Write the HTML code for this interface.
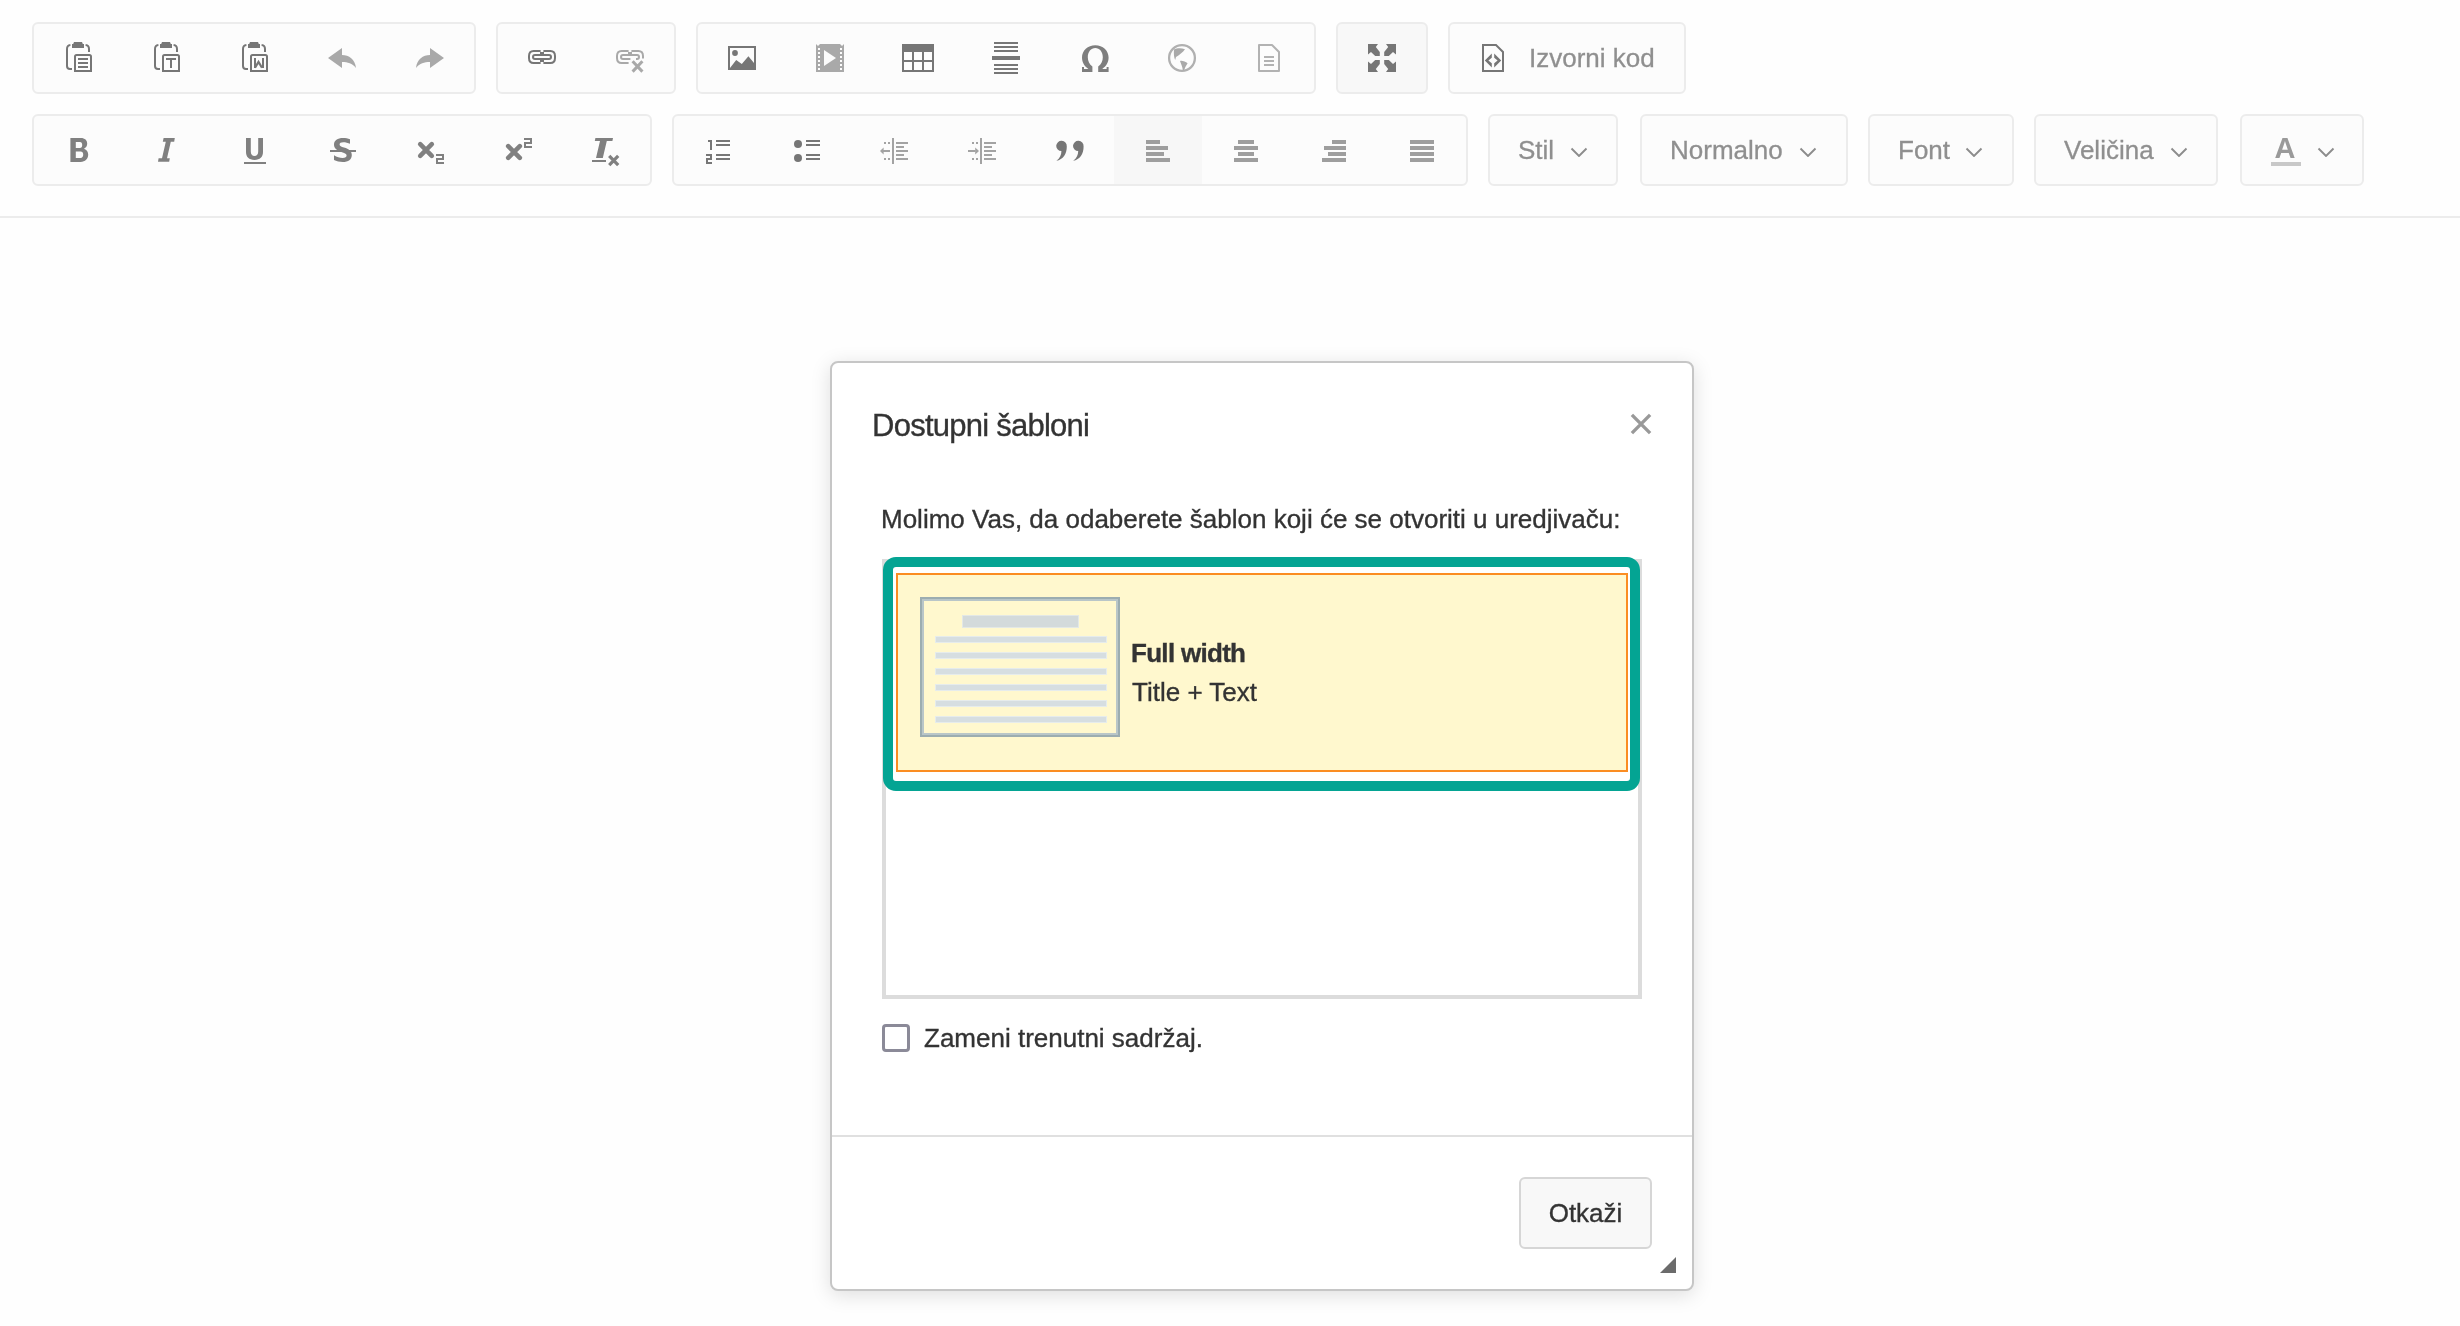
<!DOCTYPE html>
<html><head><meta charset="utf-8"><title>Templates</title>
<style>
html,body{margin:0;padding:0;width:2460px;height:1326px;overflow:hidden;background:#fefefe;font-family:"Liberation Sans",sans-serif;}
.a{position:absolute;}
.g{position:absolute;box-sizing:border-box;border:2px solid #ececec;border-radius:6px;background:#fcfcfc;}
.ic{position:absolute;width:32px;height:32px;overflow:visible;filter:blur(0.45px);}
.cb{position:absolute;box-sizing:border-box;border:2px solid #ececec;border-radius:6px;background:#fcfcfc;height:72px;top:114px;}
.ct{position:absolute;top:135px;font-size:26px;line-height:30px;color:#8f8f8f;white-space:nowrap;-webkit-text-stroke:0.3px #8f8f8f;will-change:transform;}
.chev{position:absolute;width:18px;height:10px;top:147px;}
.txt{position:absolute;white-space:nowrap;color:#333;-webkit-text-stroke:0.35px #333;will-change:transform;}
</style></head><body>
<!-- toolbar row 1 -->
<div class="g" style="left:32px;top:22px;width:444px;height:72px"></div>
<div class="g" style="left:496px;top:22px;width:180px;height:72px"></div>
<div class="g" style="left:696px;top:22px;width:620px;height:72px"></div>
<div class="g" style="left:1336px;top:22px;width:92px;height:72px;background:#f8f8f8"></div>
<div class="g" style="left:1448px;top:22px;width:238px;height:72px"></div>
<!-- toolbar row 2 -->
<div class="g" style="left:32px;top:114px;width:620px;height:72px"></div>
<div class="g" style="left:672px;top:114px;width:796px;height:72px"><div class="a" style="left:440px;top:0;width:88px;height:68px;background:#f7f7f7"></div></div>
<div class="cb" style="left:1488px;width:130px"></div>
<div class="cb" style="left:1640px;width:208px"></div>
<div class="cb" style="left:1868px;width:146px"></div>
<div class="cb" style="left:2034px;width:184px"></div>
<div class="cb" style="left:2240px;width:124px"></div>
<div class="ct" style="left:1518px">Stil</div>
<div class="ct" style="left:1670px">Normalno</div>
<div class="ct" style="left:1898px">Font</div>
<div class="ct" style="left:2064px">Veličina</div>
<svg class="chev" style="left:1570px" viewBox="0 0 18 10"><path d="M1.5,1.5 L9,9 L16.5,1.5" fill="none" stroke="#8c8c8c" stroke-width="1.9"/></svg>
<svg class="chev" style="left:1799px" viewBox="0 0 18 10"><path d="M1.5,1.5 L9,9 L16.5,1.5" fill="none" stroke="#8c8c8c" stroke-width="1.9"/></svg>
<svg class="chev" style="left:1965px" viewBox="0 0 18 10"><path d="M1.5,1.5 L9,9 L16.5,1.5" fill="none" stroke="#8c8c8c" stroke-width="1.9"/></svg>
<svg class="chev" style="left:2170px" viewBox="0 0 18 10"><path d="M1.5,1.5 L9,9 L16.5,1.5" fill="none" stroke="#8c8c8c" stroke-width="1.9"/></svg>
<svg class="chev" style="left:2317px" viewBox="0 0 18 10"><path d="M1.5,1.5 L9,9 L16.5,1.5" fill="none" stroke="#8c8c8c" stroke-width="1.9"/></svg>
<!-- separator -->
<div class="a" style="left:0;top:216px;width:2460px;height:2px;background:#ececec"></div>

<!-- ICONS -->
<svg class="ic" style="left:62px;top:40px" viewBox="0 0 16 16" fill="#767676" ><path d="M6,1 H10 L10.4,2 H11 V4 H5 V2 H5.6 Z"/><path d="M4.2,2.5 C3.1,2.6 2.5,3.3 2.5,4.5 V13 C2.5,14 3,14.5 4,14.5 H5" fill="none" stroke="#767676" stroke-width="1"/><path d="M11.8,2.5 C12.9,2.6 13.5,3.3 13.5,4.5 V6" fill="none" stroke="#767676" stroke-width="1"/><path d="M6.5,15.5 V8.3 Q6.5,7.5 7.3,7.5 H13.7 Q14.5,7.5 14.5,8.3 V15.5 Z" fill="none" stroke="#767676" stroke-width="1"/><rect x="8" y="9" width="5" height="1"/><rect x="8" y="11" width="5" height="1"/><rect x="8" y="13" width="5" height="1"/></svg>
<svg class="ic" style="left:150px;top:40px" viewBox="0 0 16 16" fill="#767676" ><path d="M6,1 H10 L10.4,2 H11 V4 H5 V2 H5.6 Z"/><path d="M4.2,2.5 C3.1,2.6 2.5,3.3 2.5,4.5 V13 C2.5,14 3,14.5 4,14.5 H5" fill="none" stroke="#767676" stroke-width="1"/><path d="M11.8,2.5 C12.9,2.6 13.5,3.3 13.5,4.5 V6" fill="none" stroke="#767676" stroke-width="1"/><path d="M6.5,15.5 V8.3 Q6.5,7.5 7.3,7.5 H13.7 Q14.5,7.5 14.5,8.3 V15.5 Z" fill="none" stroke="#767676" stroke-width="1"/><rect x="8" y="9" width="5" height="1"/><rect x="10" y="10" width="1" height="4"/></svg>
<svg class="ic" style="left:238px;top:40px" viewBox="0 0 16 16" fill="#767676" ><path d="M6,1 H10 L10.4,2 H11 V4 H5 V2 H5.6 Z"/><path d="M4.2,2.5 C3.1,2.6 2.5,3.3 2.5,4.5 V13 C2.5,14 3,14.5 4,14.5 H5" fill="none" stroke="#767676" stroke-width="1"/><path d="M11.8,2.5 C12.9,2.6 13.5,3.3 13.5,4.5 V6" fill="none" stroke="#767676" stroke-width="1"/><path d="M6.5,15.5 V8.3 Q6.5,7.5 7.3,7.5 H13.7 Q14.5,7.5 14.5,8.3 V15.5 Z" fill="none" stroke="#767676" stroke-width="1"/><rect x="8" y="9" width="1" height="5"/><rect x="12" y="9" width="1" height="5"/><path d="M8.5,13.9 L10.25,11 L12,13.9" fill="none" stroke="#767676" stroke-width="1.1"/></svg>
<svg class="ic" style="left:326px;top:40px" viewBox="0 0 16 16" fill="#a9a9a9" ><path d="M1,9 L8,4 L8,7.5 C11.5,7.5 14.5,9.5 15,14 C13,11.6 11,11 8,11 L8,14 Z"/></svg>
<svg class="ic" style="left:414px;top:40px" viewBox="0 0 16 16" fill="#a9a9a9" ><path d="M15,9 L8,4 L8,7.5 C4.5,7.5 1.5,9.5 1,14 C3,11.6 5,11 8,11 L8,14 Z"/></svg>
<svg class="ic" style="left:526px;top:40px" viewBox="0 0 16 16" fill="#767676" ><path d="M7.3,5.5 H3.8 Q1.5,5.5 1.5,8 V9 Q1.5,11.5 3.8,11.5 H7.3" fill="none" stroke="#767676" stroke-width="1"/><path d="M8.7,5.5 H12.2 Q14.5,5.5 14.5,8 V9 Q14.5,11.5 12.2,11.5 H8.7" fill="none" stroke="#767676" stroke-width="1"/><rect x="3.5" y="7.5" width="9" height="2" rx="1" fill="none" stroke="#767676" stroke-width="1"/><rect x="7" y="6" width="2" height="1"/><rect x="7" y="10" width="2" height="1"/></svg>
<svg class="ic" style="left:614px;top:40px" viewBox="0 0 16 16" fill="#a9a9a9" ><path d="M7.3,5.5 H3.8 Q1.5,5.5 1.5,8 V9 Q1.5,11.5 3.8,11.5 H7.3" fill="none" stroke="#a9a9a9" stroke-width="1"/><path d="M8.7,5.5 H12.2 Q14.5,5.5 14.5,8 V9.2" fill="none" stroke="#a9a9a9" stroke-width="1"/><path d="M8.2,9.5 H4.5 Q3.5,9.5 3.5,8.5 Q3.5,7.5 4.5,7.5 H11.5 Q12.5,7.5 12.5,8.5 Q12.5,9.5 11.5,9.5 H11" fill="none" stroke="#a9a9a9" stroke-width="1"/><path d="M9.3,10.6 L14.2,15.8 M14.2,10.6 L9.3,15.8" stroke="#a9a9a9" stroke-width="1.5" fill="none"/><rect x="7" y="6" width="2" height="1"/></svg>
<svg class="ic" style="left:726px;top:40px" viewBox="0 0 16 16" fill="#767676" ><rect x="1.5" y="3.5" width="13" height="11" fill="none" stroke="#767676" stroke-width="1"/><circle cx="4.5" cy="6.5" r="1.45"/><path d="M2,14 L5.1,10 L7.9,12 L11.2,8.1 L14,11.5 L14,14 Z"/></svg>
<svg class="ic" style="left:814px;top:40px" viewBox="0 0 16 16" fill="#a9a9a9" ><path fill-rule="evenodd" d="M1,2 L2,3 L3,2 L13,2 L14,3 L15,2 L15,16 L1,16 Z M2,4 h1 v1 h-1 Z M2,6 h1 v1 h-1 Z M2,8 h1 v1 h-1 Z M2,10 h1 v1 h-1 Z M2,12 h1 v1 h-1 Z M2,14 h1 v1 h-1 Z M13,4 h1 v1 h-1 Z M13,6 h1 v1 h-1 Z M13,8 h1 v1 h-1 Z M13,10 h1 v1 h-1 Z M13,12 h1 v1 h-1 Z M13,14 h1 v1 h-1 Z M5,5 L11,9 L5,13 Z"/></svg>
<svg class="ic" style="left:902px;top:40px" viewBox="0 0 16 16" fill="#767676" ><path fill-rule="evenodd" d="M0,2 H16 V16 H0 Z M1,6 h4 v4 h-4 Z M6,6 h4 v4 h-4 Z M11,6 h4 v4 h-4 Z M1,11 h4 v4 h-4 Z M6,11 h4 v4 h-4 Z M11,11 h4 v4 h-4 Z"/></svg>
<svg class="ic" style="left:990px;top:40px" viewBox="0 0 16 16" fill="#767676" ><rect x="2" y="1" width="12" height="1"/><rect x="2" y="3" width="12" height="1"/><rect x="2" y="5" width="12" height="1"/><rect x="1" y="8" width="14" height="2"/><rect x="2" y="12" width="12" height="1"/><rect x="2" y="14" width="12" height="1"/><rect x="2" y="16" width="12" height="1"/></svg>
<svg class="ic" style="left:1078px;top:40px" viewBox="0 0 16 16" fill="#767676" ><path fill="#7e7e7e" d="M2,16 V13.5 H3 V14.5 H5.2 C3.2,13.2 2,11.2 2,8.8 C2,5.2 4.9,2.6 8.65,2.6 C12.4,2.6 15.3,5.2 15.3,8.8 C15.3,11.2 14.1,13.2 12.1,14.5 H14.3 V13.5 H15.3 V16 H10.1 V13.2 C11.6,12.2 12.4,10.6 12.4,8.6 C12.4,5.9 10.8,4 8.65,4 C6.5,4 4.9,5.9 4.9,8.6 C4.9,10.6 5.7,12.2 7.2,13.2 V16 Z"/></svg>
<svg class="ic" style="left:1166px;top:40px" viewBox="0 0 16 16" fill="#a9a9a9" ><circle cx="8" cy="9" r="6.45" fill="none" stroke="#b0b0b0" stroke-width="1.15"/><path d="M4,4.8 C5.5,4 7.5,4 9.5,4.6 C8.5,6.2 6.5,7.5 5,8.5 L4.6,10 C4,9 3.8,7 4,4.8 Z"/><path d="M7,10.5 C8,10.2 9.8,10.8 10.8,11.6 C10,12.8 9.4,14 9,15.2 L8.4,15 C8.3,13.5 7.5,12 7,10.5 Z"/></svg>
<svg class="ic" style="left:1254px;top:40px" viewBox="0 0 16 16" fill="#b2b2b2" ><path d="M2.5,2.5 H9 L12.5,6 V15.5 H2.5 Z" fill="none" stroke="#b2b2b2" stroke-width="1" stroke-linejoin="round"/><rect x="5" y="8" width="5" height="1"/><rect x="5" y="10" width="5" height="1"/><rect x="5" y="12" width="5" height="1"/></svg>
<svg class="ic" style="left:1366px;top:40px" viewBox="0 0 16 16" fill="#767676" ><path d="M1,2 L6,2 L4.9,3.5 L6.9,6 L6.9,8 L4.6,8 L2.5,6 L1,7.2 Z M15,2 L10,2 L11.1,3.5 L9.1,6 L9.1,8 L11.4,8 L13.5,6 L15,7.2 Z M1,16 L6,16 L4.9,14.5 L6.9,12 L6.9,10 L4.6,10 L2.5,12 L1,10.8 Z M15,16 L10,16 L11.1,14.5 L9.1,12 L9.1,10 L11.4,10 L13.5,12 L15,10.8 Z"/></svg>
<svg class="ic" style="left:1476px;top:40px" viewBox="0 0 16 16" fill="#767676" ><path d="M3.5,2.5 H10 L13.5,6 V15.5 H3.5 Z" fill="none" stroke="#767676" stroke-width="1"/><path d="M7.9,6.8 L7.9,8.9 L6.2,10.25 L7.9,11.6 L7.9,13.7 L4.4,10.25 Z M9.1,6.8 L9.1,8.9 L10.8,10.25 L9.1,11.6 L9.1,13.7 L12.6,10.25 Z"/></svg>
<svg class="ic" style="left:62px;top:134px" viewBox="0 0 16 16" fill="#808080" ><path fill-rule="evenodd" d="M4.2,2 H9.4 C11.5,2 12.6,3.2 12.6,4.8 C12.6,6 12,6.9 11,7.4 C12.4,7.8 13.1,9 13.1,10.3 C13.1,12.5 11.6,14 9.3,14 H4.2 Z M6.9,4 V7 H9 C9.7,7 10.1,6.4 10.1,5.5 C10.1,4.6 9.7,4 9,4 Z M6.9,8.8 V12 H9.3 C10.1,12 10.6,11.4 10.6,10.4 C10.6,9.4 10.1,8.8 9.3,8.8 Z"/></svg>
<svg class="ic" style="left:150px;top:134px" viewBox="0 0 16 16" fill="#808080" ><path d="M6.8,2 H12.4 L12.1,3.9 H10.4 L8.5,12.1 H9.9 L9.6,13.9 H4 L4.3,12.1 H6 L7.9,3.9 H6.4 Z"/></svg>
<svg class="ic" style="left:238px;top:134px" viewBox="0 0 16 16" fill="#808080" ><path d="M4,2 H6.4 V8.8 C6.4,10.3 7.1,11 8.25,11 C9.4,11 10.1,10.3 10.1,8.8 V2 H12.5 V9 C12.5,11.5 11,12.95 8.25,12.95 C5.5,12.95 4,11.5 4,9 Z"/><rect x="3" y="14" width="11" height="1"/></svg>
<svg class="ic" style="left:326px;top:134px" viewBox="0 0 16 16" fill="#808080" ><path d="M12,2.6 V4.9 C11,4.4 9.8,4.1 8.6,4.1 C7.4,4.1 6.8,4.5 6.8,5.2 C6.8,6 7.6,6.3 9,6.8 C11.5,7.6 12.9,8.6 12.9,10.5 C12.9,12.7 11.2,14 8.4,14 C6.8,14 5.2,13.6 4,13 V10.6 C5.4,11.5 6.9,12 8.3,12 C9.6,12 10.3,11.6 10.3,10.8 C10.3,10 9.6,9.6 8,9.1 C5.5,8.3 4,7.3 4,5.3 C4,3.2 5.8,2 8.5,2 C9.8,2 11,2.2 12,2.6 Z"/><rect x="2" y="8" width="13" height="1"/></svg>
<svg class="ic" style="left:414px;top:134px" viewBox="0 0 16 16" fill="#808080" ><path d="M3.1,5.1 L8.9,10.9 M8.9,5.1 L3.1,10.9" stroke="#808080" stroke-width="2.3" stroke-linecap="round" fill="none"/><rect x="11" y="10" width="4" height="1"/><rect x="14" y="10" width="1" height="3"/><rect x="11" y="12" width="4" height="1"/><rect x="11" y="12" width="1" height="3"/><rect x="11" y="14" width="4" height="1"/></svg>
<svg class="ic" style="left:502px;top:134px" viewBox="0 0 16 16" fill="#808080" ><path d="M3.1,6.1 L8.9,11.9 M8.9,6.1 L3.1,11.9" stroke="#808080" stroke-width="2.3" stroke-linecap="round" fill="none"/><rect x="11" y="2" width="4" height="1"/><rect x="14" y="2" width="1" height="3"/><rect x="11" y="4" width="4" height="1"/><rect x="11" y="4" width="1" height="3"/><rect x="11" y="6" width="4" height="1"/></svg>
<svg class="ic" style="left:590px;top:134px" viewBox="0 0 16 16" fill="#808080" ><path d="M2.7,2 H11.5 L11.2,3.5 H8.4 L6.4,12 H3 L5,3.5 H2.4 Z"/><rect x="1" y="13" width="7" height="1"/><path d="M9.6,10.9 L14.1,15.6 M14.1,10.9 L9.6,15.6" stroke="#808080" stroke-width="1.6" fill="none"/></svg>
<svg class="ic" style="left:702px;top:134px" viewBox="0 0 16 16" fill="#767676" ><rect x="3" y="3" width="2" height="1"/><rect x="4" y="3" width="1" height="5"/><rect x="2" y="10" width="3" height="1"/><rect x="4" y="10" width="1" height="3"/><rect x="2" y="12" width="3" height="1"/><rect x="2" y="12" width="1" height="3"/><rect x="2" y="14" width="3" height="1"/><rect x="7" y="3" width="7" height="1"/><rect x="7" y="5" width="7" height="1"/><rect x="7" y="10" width="7" height="1"/><rect x="7" y="12" width="7" height="1"/></svg>
<svg class="ic" style="left:790px;top:134px" viewBox="0 0 16 16" fill="#767676" ><circle cx="4" cy="5" r="2"/><circle cx="4" cy="12" r="2"/><rect x="8" y="3" width="7" height="1"/><rect x="8" y="5" width="7" height="1"/><rect x="8" y="10" width="7" height="1"/><rect x="8" y="12" width="7" height="1"/></svg>
<svg class="ic" style="left:878px;top:134px" viewBox="0 0 16 16" fill="#a3a3a3" ><rect x="3" y="4" width="1" height="1"/><rect x="5" y="4" width="1" height="1"/><rect x="3" y="12" width="1" height="1"/><rect x="5" y="12" width="1" height="1"/><rect x="2.5" y="8" width="3.5" height="1"/><rect x="7" y="2" width="1" height="13"/><rect x="9" y="4" width="6" height="1"/><rect x="9" y="6" width="4" height="1"/><rect x="9" y="8" width="6" height="1"/><rect x="9" y="10" width="4" height="1"/><rect x="9" y="12" width="6" height="1"/><path d="M1,8.5 L2.8,6.8 L2.8,10.2 Z"/></svg>
<svg class="ic" style="left:966px;top:134px" viewBox="0 0 16 16" fill="#a3a3a3" ><rect x="3" y="4" width="1" height="1"/><rect x="5" y="4" width="1" height="1"/><rect x="3" y="12" width="1" height="1"/><rect x="5" y="12" width="1" height="1"/><rect x="1" y="8" width="3.8" height="1"/><rect x="7" y="2" width="1" height="13"/><rect x="9" y="4" width="6" height="1"/><rect x="9" y="6" width="4" height="1"/><rect x="9" y="8" width="6" height="1"/><rect x="9" y="10" width="4" height="1"/><rect x="9" y="12" width="6" height="1"/><path d="M6.5,8.5 L4.6,6.8 L4.6,10.2 Z"/></svg>
<svg class="ic" style="left:1054px;top:134px" viewBox="0 0 16 16" fill="#767676" ><path transform="translate(0,0)" d="M1.1,5.9 A2.6,2.6 0 0 1 6.4,6.2 C6.4,10 4.6,12.6 1.2,13.4 C3,12 3.7,10.5 3.7,8.5 A2.6,2.6 0 0 1 1.1,5.9 Z"/><path transform="translate(8.4,0)" d="M1.1,5.9 A2.6,2.6 0 0 1 6.4,6.2 C6.4,10 4.6,12.6 1.2,13.4 C3,12 3.7,10.5 3.7,8.5 A2.6,2.6 0 0 1 1.1,5.9 Z"/></svg>
<svg class="a" style="left:1142px;top:134px" width="32" height="32" viewBox="0 0 32 32" fill="#9e9e9e"><rect x="4" y="6" width="14" height="4"/><rect x="4" y="12" width="22" height="4"/><rect x="4" y="18" width="18" height="4"/><rect x="4" y="24" width="24" height="4"/></svg>
<svg class="a" style="left:1230px;top:134px" width="32" height="32" viewBox="0 0 32 32" fill="#9e9e9e"><rect x="8" y="6" width="16" height="4"/><rect x="4" y="12" width="24" height="4"/><rect x="8" y="18" width="16" height="4"/><rect x="4" y="24" width="24" height="4"/></svg>
<svg class="a" style="left:1318px;top:134px" width="32" height="32" viewBox="0 0 32 32" fill="#9e9e9e"><rect x="14" y="6" width="14" height="4"/><rect x="6" y="12" width="22" height="4"/><rect x="10" y="18" width="18" height="4"/><rect x="4" y="24" width="24" height="4"/></svg>
<svg class="a" style="left:1406px;top:134px" width="32" height="32" viewBox="0 0 32 32" fill="#9e9e9e"><rect x="4" y="6" width="24" height="4"/><rect x="4" y="12" width="24" height="4"/><rect x="4" y="18" width="24" height="4"/><rect x="4" y="24" width="24" height="4"/></svg>
<div class="a" style="left:2272px;top:132px;width:26px;font-size:29px;line-height:32px;font-weight:bold;color:#9a9a9a;text-align:center;will-change:transform">A</div>
<div class="a" style="left:2271px;top:162px;width:30px;height:4px;background:#c8c8c8"></div>
<div class="a" style="left:1529px;top:43px;font-size:26px;line-height:30px;color:#8f8f8f;white-space:nowrap;-webkit-text-stroke:0.3px #8f8f8f;will-change:transform">Izvorni kod</div>

<!-- dialog -->
<div class="a" style="left:830px;top:361px;width:864px;height:930px;box-sizing:border-box;border:2px solid #c6c6c6;border-radius:8px;background:#fff;box-shadow:0 4px 20px rgba(0,0,0,0.13)"></div>
<div class="txt" style="left:872px;top:406px;font-size:31px;line-height:40px;letter-spacing:-0.75px;">Dostupni šabloni</div>
<svg class="a" style="left:1628px;top:411px" width="26" height="26" viewBox="0 0 26 26"><path d="M3.9,3.9 L22.1,22.1 M22.1,3.9 L3.9,22.1" stroke="#999" stroke-width="3.4" fill="none"/></svg>
<div class="txt" style="left:881px;top:503px;font-size:26px;line-height:32px;">Molimo Vas, da odaberete šablon koji će se otvoriti u uredjivaču:</div>
<!-- list -->
<div class="a" style="left:882px;top:559px;width:760px;height:440px;box-sizing:border-box;border:4px solid #dcdcdc;background:#fff"></div>
<div class="a" style="left:883px;top:557px;width:757px;height:234px;box-sizing:border-box;border:10px solid #04a493;border-radius:13px;background:#fff"></div>
<div class="a" style="left:896px;top:573px;width:732px;height:199px;box-sizing:border-box;border:2px solid #fb8d22;background:#fff8ce"></div>
<!-- thumbnail -->
<svg class="a" style="left:920px;top:597px" width="200" height="140" viewBox="0 0 200 140">
<rect x="1" y="1" width="198" height="138" fill="none" stroke="#9cadb0" stroke-width="2"/>
<rect x="3" y="3" width="194" height="134" fill="none" stroke="#b9c6c8" stroke-width="2"/>
<rect x="42" y="18" width="117" height="13" fill="#e3e8e6"/>
<rect x="43" y="19" width="115" height="11" fill="#d3dadb"/>
<g fill="#e6ecec">
<rect x="15" y="39" width="172" height="7"/><rect x="15" y="55" width="172" height="7"/><rect x="15" y="71" width="172" height="7"/>
<rect x="15" y="87" width="172" height="7"/><rect x="15" y="103" width="172" height="7"/><rect x="15" y="119" width="172" height="7"/>
</g>
<g fill="#d6dee1">
<rect x="16" y="40" width="170" height="5"/><rect x="16" y="56" width="170" height="5"/><rect x="16" y="72" width="170" height="5"/>
<rect x="16" y="88" width="170" height="5"/><rect x="16" y="104" width="170" height="5"/><rect x="16" y="120" width="170" height="5"/>
</g>
</svg>
<div class="txt" style="left:1131px;top:637px;font-size:26px;line-height:32px;font-weight:bold;letter-spacing:-0.7px;">Full width</div>
<div class="txt" style="left:1132px;top:676px;font-size:26px;line-height:32px;">Title + Text</div>
<!-- checkbox -->
<div class="a" style="left:882px;top:1024px;width:28px;height:28px;box-sizing:border-box;border:3px solid #8b8a98;border-radius:4px;background:#fff"></div>
<div class="txt" style="left:924px;top:1022px;font-size:26px;line-height:32px;">Zameni trenutni sadržaj.</div>
<!-- footer -->
<div class="a" style="left:832px;top:1135px;width:860px;height:2px;background:#e0e0e0"></div>
<div class="a" style="left:1519px;top:1177px;width:133px;height:72px;box-sizing:border-box;border:2px solid #d6d6d6;border-radius:6px;background:#f8f8f8"></div>
<div class="txt" style="left:1519px;top:1197px;width:133px;text-align:center;font-size:26px;line-height:32px;">Otkaži</div>
<svg class="a" style="left:1660px;top:1257px" width="16" height="16" viewBox="0 0 16 16"><path d="M16,0 L16,16 L0,16 Z" fill="#6b6b6b"/></svg>
</body></html>
